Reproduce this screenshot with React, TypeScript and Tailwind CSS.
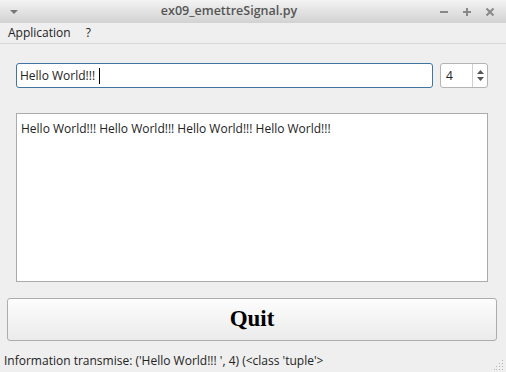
import React, { useState } from 'react';

const font = { fontFamily: '"Open Sans", "Noto Sans", sans-serif' };

function TitleBar() {
  return (
    <div className="flex h-[23px] items-center bg-gradient-to-b from-[#f3f3f3] to-[#d2d2d2] px-[8px] text-[#666]">
      <svg width="10" height="6" viewBox="0 0 10 6" className="ml-[1px]">
        <path d="M1 1 L9 1 L5 5 Z" fill="#777" />
      </svg>
      <div className="flex-1 text-center text-[12.5px] font-semibold text-[#555]">ex09_emettreSignal.py</div>
      <div className="flex items-center gap-[13px] pr-[3px]">
        <svg width="10" height="10" viewBox="0 0 10 10">
          <path d="M1 5 H9" stroke="#888" strokeWidth="2" />
        </svg>
        <svg width="10" height="10" viewBox="0 0 10 10">
          <path d="M1 5 H9 M5 1 V9" stroke="#888" strokeWidth="2" />
        </svg>
        <svg width="10" height="10" viewBox="0 0 10 10">
          <path d="M1.5 1.5 L8.5 8.5 M8.5 1.5 L1.5 8.5" stroke="#888" strokeWidth="2" />
        </svg>
      </div>
    </div>
  );
}

function MenuBar() {
  return (
    <div className="flex h-[21px] items-center gap-[15px] border-b border-[#d8d8d8] px-[8px] text-[12px] text-[#222]">
      <span>Application</span>
      <span>?</span>
    </div>
  );
}

function SpinBox({ value }: { value: number }) {
  return (
    <div className="flex h-[25px] w-[48px] items-stretch rounded-[3px] border border-[#b4b4b4] bg-white">
      <div className="flex flex-1 items-center pl-[5px] text-[12px] text-[#222]">{value}</div>
      <div className="flex w-[15px] flex-col items-center justify-center gap-[3px] border-l border-[#cfcfcf]">
        <svg width="7" height="4" viewBox="0 0 7 4">
          <path d="M0 4 L3.5 0 L7 4 Z" fill="#555" />
        </svg>
        <svg width="7" height="4" viewBox="0 0 7 4">
          <path d="M0 0 L3.5 4 L7 0 Z" fill="#555" />
        </svg>
      </div>
    </div>
  );
}

export default function App() {
  const [text] = useState('Hello World!!! ');
  const [count] = useState(4);
  const repeated = Array(count).fill(text.trim()).join(' ');

  return (
    <div className="flex h-[372px] w-[506px] flex-col overflow-hidden bg-[#efefef]" style={font}>
      <TitleBar />
      <MenuBar />
      <div className="flex flex-col pl-[7px] pr-[9px]">
        <div className="mt-[19px] flex gap-[7px] px-[9px]">
          <div className="flex h-[25px] flex-1 items-center rounded-[3px] border border-[#3f74a3] bg-white pl-[3px] text-[12px] text-[#222]">
            <span className="whitespace-pre">{text}</span>
            <span className="ml-[1px] h-[16px] w-[1px] bg-black" />
          </div>
          <SpinBox value={count} />
        </div>
        <div className="mx-[9px] mt-[25px] h-[169px] border border-[#ababab] bg-white px-[4px] py-[6px] text-[12px] text-[#222]">
          {repeated}
        </div>
        <button className="mt-[16px] flex h-[43px] items-center justify-center rounded-[3px] border border-[#adadad] bg-gradient-to-b from-[#fdfdfd] to-[#ebebeb] text-[23px] font-bold text-black"
          style={{ fontFamily: '"Liberation Serif", serif' }}>
          Quit
        </button>
      </div>
      <div className="flex flex-1 items-end justify-between pl-[4px] pr-[2px] text-[12px] text-[#222]">
        <span className="mb-[2px]">Information transmise: ('Hello World!!! ', 4) (&lt;class 'tuple'&gt;</span>
        <svg width="10" height="10" viewBox="0 0 10 10" className="mb-[2px]">
          <g fill="#b5b5b5">
            <rect x="8" y="0" width="1" height="1" />
            <rect x="5" y="3" width="1" height="1" />
            <rect x="8" y="3" width="1" height="1" />
            <rect x="2" y="6" width="1" height="1" />
            <rect x="5" y="6" width="1" height="1" />
            <rect x="8" y="6" width="1" height="1" />
            <rect x="0" y="9" width="1" height="1" />
            <rect x="2" y="9" width="1" height="1" />
            <rect x="5" y="9" width="1" height="1" />
            <rect x="8" y="9" width="1" height="1" />
          </g>
        </svg>
      </div>
    </div>
  );
}
